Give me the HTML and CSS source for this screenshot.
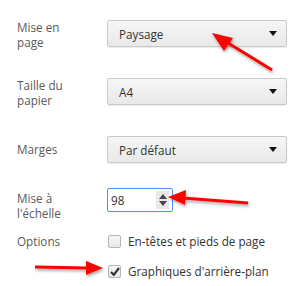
FILE: index.html
```html
<!DOCTYPE html>
<html lang="fr">
<head>
<meta charset="UTF-8">
<title>Paramètres d'impression</title>
<link rel="stylesheet" href="styles.css">
</head>
<body>

<div class="settings">
  <div class="row row-select">
    <div class="label">Mise en<br>page</div>
    <div class="select"><span>Paysage</span><i class="caret"></i></div>
  </div>
  <div class="row row-select">
    <div class="label">Taille du<br>papier</div>
    <div class="select"><span>A4</span><i class="caret"></i></div>
  </div>
  <div class="row row-select center last">
    <div class="label">Marges</div>
    <div class="select"><span>Par défaut</span><i class="caret"></i></div>
  </div>
  <div class="row row-scale">
    <div class="label">Mise à<br>l'échelle</div>
    <div class="number">
      <span>98</span>
      <div class="spin"><i class="up"></i><i class="down"></i></div>
    </div>
  </div>
  <div class="row row-check">
    <div class="label">Options</div>
    <label class="check"><span class="box"></span>En-têtes et pieds de page</label>
  </div>
  <div class="row row-check">
    <div class="label"></div>
    <label class="check"><span class="box">
      <svg width="10" height="9" viewBox="0 0 10 9"><path d="M1 5 L3.8 7.8 L9 1" fill="none" stroke="#333" stroke-width="2.2"/></svg>
    </span>Graphiques d'arrière-plan</label>
  </div>
</div>

<!-- flèches rouges par-dessus la capture -->
<svg class="arrows" width="297" height="286" viewBox="0 0 297 286">
  <defs>
    <filter id="shadow" x="-20%" y="-50%" width="140%" height="200%">
      <feDropShadow dx="1" dy="2" stdDeviation="1.5" flood-color="#000" flood-opacity="0.35"/>
    </filter>
  </defs>
  <g fill="#f00" stroke="#f00" filter="url(#shadow)">
    <line x1="272" y1="70" x2="224" y2="40.5" stroke-width="3"/>
    <polygon points="212,33 233,38 224,51" stroke="none"/>
    <line x1="248" y1="203" x2="183" y2="198" stroke-width="3"/>
    <polygon points="168,197 186,190 185,205" stroke="none"/>
    <line x1="35" y1="267" x2="88" y2="268" stroke-width="3"/>
    <polygon points="103,268 86,261 86,275" stroke="none"/>
  </g>
</svg>

</body>
</html>
```

FILE: styles.css
```css
body { margin: 0; background: #fff; font-family: "Open Sans", "Liberation Sans", sans-serif; position: relative; }
.settings { padding: 20px 10px 0 17px; }
.row { display: flex; align-items: flex-start; }
.row.center { align-items: center; }
.label { width: 90px; flex: none; font-size: 11.7px; line-height: 15px; color: #5a5a5a; padding-top: 0; }
.row-select { height: 27px; margin-bottom: 31px; }
.row-select.last { margin-bottom: 25px; }
.select {
  width: 158px; height: 25px;
  border: 1px solid #c9c9c9; border-radius: 2px;
  background: linear-gradient(#f6f6f6, #e9e9e9);
  box-shadow: 0 1px 1px rgba(0,0,0,0.08);
  display: flex; align-items: center; justify-content: space-between;
  padding: 0 9px 0 11px;
  font-size: 11.7px; color: #333;
}
.caret { width: 0; height: 0; border-left: 4px solid transparent; border-right: 4px solid transparent; border-top: 5px solid #111; }
.row-scale { height: 24px; margin-bottom: 22px; }
.row-scale .label { padding-top: 3px; }
.number {
  width: 61px; height: 22px; border: 1px solid #4d90fe; border-radius: 2px;
  display: flex; align-items: center; justify-content: space-between;
  font-size: 11.7px; color: #333; padding-left: 3px;
}
.spin { width: 13px; height: 18px; margin-right: 3px; background: #e8e8e8; display: flex; flex-direction: column; align-items: center; justify-content: center; gap: 2px; }
.spin .up { width: 0; height: 0; border-left: 4px solid transparent; border-right: 4px solid transparent; border-bottom: 5px solid #444; }
.spin .down { width: 0; height: 0; border-left: 4px solid transparent; border-right: 4px solid transparent; border-top: 5px solid #444; }
.row-check { align-items: center; height: 14px; margin-bottom: 16px; }
.check { display: flex; align-items: center; font-size: 11.7px; color: #333; white-space: nowrap; }
.box {
  width: 11px; height: 11px; margin-left: 1px; margin-right: 7px;
  border: 1px solid #b5b5b5; border-radius: 2px;
  background: linear-gradient(#f7f7f7, #e7e7e7);
  display: flex; align-items: center; justify-content: center;
}
.arrows { position: absolute; left: 0; top: 0; pointer-events: none; }
```
